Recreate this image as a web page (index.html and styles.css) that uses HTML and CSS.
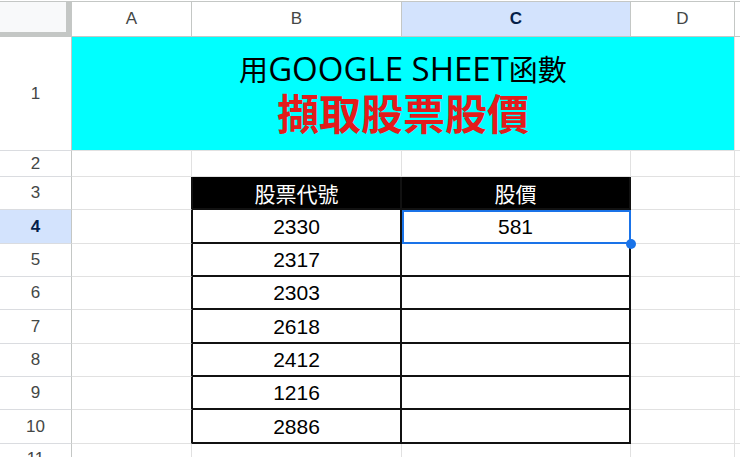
FILE: index.html
```html
<!DOCTYPE html>
<html lang="zh-Hant">
<head>
<meta charset="utf-8">
<title>Sheet</title>
<link rel="stylesheet" href="styles.css">
</head>
<body>
<div class="sheet">
  <div class="corner"></div>
  <div class="ch">A</div>
  <div class="ch">B</div>
  <div class="ch sel">C</div>
  <div class="ch">D</div>
  <div class="ch edge"></div>

  <div class="rh">1</div>
  <div class="title">
    <div class="t1"><span class="cjk">用</span>GOOGLE SHEET<span class="cjk">函數</span></div>
    <div class="t2">擷取股票股價</div>
  </div>
  <div class="c edge"></div>

  <div class="rh">2</div>
  <div class="c"></div><div class="c"></div><div class="c"></div><div class="c"></div><div class="c edge"></div>

  <div class="rh">3</div>
  <div class="c ta"></div><div class="c th tb">股票代號</div><div class="c th">股價</div><div class="c"></div><div class="c edge"></div>

  <div class="rh rsel">4</div>
  <div class="c ta"></div><div class="c td tb">2330</div><div class="c td active">581</div><div class="c"></div><div class="c edge"></div>

  <div class="rh">5</div>
  <div class="c ta"></div><div class="c td tb">2317</div><div class="c td"></div><div class="c"></div><div class="c edge"></div>

  <div class="rh">6</div>
  <div class="c ta"></div><div class="c td tb">2303</div><div class="c td"></div><div class="c"></div><div class="c edge"></div>

  <div class="rh">7</div>
  <div class="c ta"></div><div class="c td tb">2618</div><div class="c td"></div><div class="c"></div><div class="c edge"></div>

  <div class="rh">8</div>
  <div class="c ta"></div><div class="c td tb">2412</div><div class="c td"></div><div class="c"></div><div class="c edge"></div>

  <div class="rh">9</div>
  <div class="c ta"></div><div class="c td tb">1216</div><div class="c td"></div><div class="c"></div><div class="c edge"></div>

  <div class="rh">10</div>
  <div class="c ta"></div><div class="c td tb">2886</div><div class="c td"></div><div class="c"></div><div class="c edge"></div>

  <div class="rh">11</div>
  <div class="c"></div><div class="c"></div><div class="c"></div><div class="c"></div><div class="c edge"></div>
</div>
</body>
</html>
```

FILE: styles.css
```css
* { box-sizing: border-box; }

html, body {
  margin: 0;
  padding: 0;
  background: #ffffff;
  overflow: hidden;
}

body {
  padding-top: 1px;
  font-family: "Liberation Sans", Arial, sans-serif;
}

.sheet {
  display: grid;
  grid-template-columns: 72px 120px 210px 229px 104px 1fr;
  grid-template-rows: 36px 114px 26px 33px 34px 33px 33px 34px 33px 33px 34px 30px;
  width: 740px;
}

.sheet > div {
  min-width: 0;
}

.corner {
  background: #f8f9fa;
  border-top: 1px solid #c4c7c5;
  border-right: 6px solid #c4c7c5;
  border-bottom: 5px solid #c4c7c5;
}

.ch {
  display: flex;
  align-items: center;
  justify-content: center;
  border-top: 1px solid #c4c7c5;
  border-right: 1px solid #c4c7c5;
  border-bottom: 1px solid #c4c7c5;
  color: #444746;
  font-size: 17px;
  background: #ffffff;
}

.ch.sel {
  background: #d3e3fd;
  color: #041e49;
  font-weight: 700;
}

.ch.edge {
  border-right: none;
}

.rh {
  display: flex;
  align-items: center;
  justify-content: center;
  border-right: 1px solid #c4c7c5;
  border-bottom: 1px solid #dadce0;
  color: #444746;
  font-size: 17px;
  background: #ffffff;
}

.rh.rsel {
  background: #d3e3fd;
  color: #041e49;
  font-weight: 700;
}

.c {
  border-right: 1px solid #e1e1e1;
  border-bottom: 1px solid #e1e1e1;
  background: #ffffff;
}

.c.edge {
  border-right: none;
}

.title {
  grid-column: span 4;
  background: #00ffff;
  border-right: 1px solid #e1e1e1;
  border-bottom: 1px solid #e1e1e1;
  display: flex;
  flex-direction: column;
  align-items: center;
  justify-content: center;
}

.t1 {
  font-family: "Open Sans", "Noto Sans CJK TC", sans-serif;
  font-size: 33px;
  line-height: 36px;
  color: #000000;
  white-space: nowrap;
  margin-top: -2px;
}

.t1 .cjk {
  font-family: "Noto Sans CJK TC", sans-serif;
  font-size: 29px;
}

.t2 {
  margin-top: 2px;
  font-family: "Noto Sans CJK TC", sans-serif;
  font-weight: 700;
  font-size: 42px;
  line-height: 46px;
  color: #e31c1c;
  white-space: nowrap;
}

/* table B3:C10 */
.c.ta {
  border-right: 1px solid #111111;
}

.c.tb {
  border-left: 1px solid #111111;
}

.c.th {
  background: #000000;
  color: #ffffff;
  border-right: 2px solid #111111;
  border-bottom: 2px solid #111111;
  font-family: "Noto Sans CJK TC", sans-serif;
  font-size: 21px;
  display: flex;
  align-items: center;
  justify-content: center;
}

.c.td {
  border-right: 2px solid #111111;
  border-bottom: 2px solid #111111;
  font-size: 21px;
  color: #000000;
  display: flex;
  align-items: center;
  justify-content: center;
  padding-top: 1px;
}

.c.active {
  position: relative;
}

.c.active::after {
  content: "";
  position: absolute;
  left: 0;
  top: 0;
  right: -2px;
  bottom: -2px;
  border: 2px solid #1a73e8;
}

.c.active::before {
  content: "";
  position: absolute;
  right: -7px;
  bottom: -7px;
  width: 10px;
  height: 10px;
  border-radius: 50%;
  background: #1a73e8;
  z-index: 2;
}
```
